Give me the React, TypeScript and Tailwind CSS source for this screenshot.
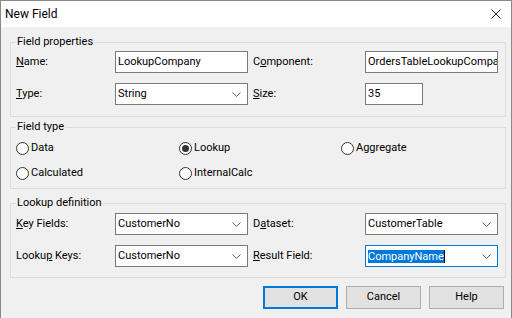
import React from "react";

const Chevron = () => (
  <svg width="9" height="5" viewBox="0 0 9 5" className="shrink-0">
    <path d="M0.5 0.5 L4.5 4.5 L8.5 0.5" stroke="#606060" strokeWidth="1" fill="none" />
  </svg>
);

function TextBox({ value, className = "" }: { value: string; className?: string }) {
  return (
    <div
      className={`h-[22px] border border-[#7a7a7a] bg-white pl-[2px] flex items-center overflow-hidden whitespace-nowrap ${className}`}
    >
      {value}
    </div>
  );
}

function Combo({ value, active, selected }: { value: string; active?: boolean; selected?: boolean }) {
  return (
    <div
      className={`h-[22px] border bg-white pl-[2px] pr-[6px] flex items-center ${
        active ? "border-[#0078d7]" : "border-[#7a7a7a]"
      }`}
    >
      <div className="flex-1 flex items-center whitespace-nowrap">
        {selected ? (
          <>
            <span className="bg-[#0078d7] text-white leading-[13px]">{value}</span>
            <span className="w-px h-[13px] bg-black" />
          </>
        ) : (
          value
        )}
      </div>
      <Chevron />
    </div>
  );
}

function Group({ title, className = "", children }: { title: string; className?: string; children: React.ReactNode }) {
  return (
    <div className={`relative ml-[9px] w-[496px] border border-[#dcdcdc] ${className}`}>
      <span className="absolute left-[5px] top-[-8px] leading-[14px] px-px bg-[#f0f0f0]">{title}</span>
      {children}
    </div>
  );
}

function Radio({ label, checked }: { label: string; checked?: boolean }) {
  return (
    <div className="flex items-center gap-[2px] h-[13px]">
      <span className="w-[13px] h-[13px] rounded-full border border-[#333] bg-white flex items-center justify-center">
        {checked && <span className="w-[7px] h-[7px] rounded-full bg-[#333]" />}
      </span>
      <span>{label}</span>
    </div>
  );
}

const Label = ({ children, className = "" }: { children: React.ReactNode; className?: string }) => (
  <div className={`flex items-center h-[22px] ${className}`}>
    <span>{children}</span>
  </div>
);

function Button({ label, primary }: { label: string; primary?: boolean }) {
  return (
    <div
      className={`w-[75px] h-[23px] flex items-center justify-center bg-[#e1e1e1] border ${
        primary ? "border-[#0078d7] shadow-[inset_0_0_0_1px_#0078d7]" : "border-[#adadad]"
      }`}
    >
      {label}
    </div>
  );
}

export default function App() {
  return (
    <div className="w-[512px] h-[318px] overflow-hidden bg-[#f0f0f0] border-x border-t border-[#8a8a8a] text-[11px] text-black [font-family:Roboto,'Noto_Sans',sans-serif]">
      <div className="h-[26px] bg-white flex items-center justify-between pl-[4px] pr-[10px]">
        <span className="text-[12px]">New Field</span>
        <svg width="10" height="10" viewBox="0 0 10 10">
          <path d="M0.5 0.5 L9.5 9.5 M9.5 0.5 L0.5 9.5" stroke="#222" strokeWidth="1" />
        </svg>
      </div>

      <Group title="Field properties" className="mt-[15px] pt-[8px] pb-[11px]">
        <div className="grid grid-cols-[5px_99px_133px_117px_133px] gap-y-[10px]">
          <span />
          <Label><u>N</u>ame:</Label>
          <TextBox value="LookupCompany" />
          <Label className="pl-[5px]">C<u>o</u>mponent:</Label>
          <TextBox value="OrdersTableLookupCompany" />
          <span />
          <Label><u>T</u>ype:</Label>
          <Combo value="String" />
          <Label className="pl-[5px]"><u>S</u>ize:</Label>
          <TextBox value="35" className="w-[58px]" />
        </div>
      </Group>

      <Group title="Field type" className="mt-[10px] pt-[14px] pb-[8px]">
        <div className="grid grid-cols-[5px_163px_162px_1fr] gap-y-[12px]">
          <span />
          <Radio label="Data" />
          <Radio label="Lookup" checked />
          <Radio label="Aggregate" />
          <span />
          <Radio label="Calculated" />
          <Radio label="InternalCalc" />
          <span />
        </div>
      </Group>

      <Group title="Lookup definition" className="mt-[14px] pt-[9px] pb-[10px]">
        <div className="grid grid-cols-[5px_99px_133px_117px_133px] gap-y-[10px]">
          <span />
          <Label><u>K</u>ey Fields:</Label>
          <Combo value="CustomerNo" />
          <Label className="pl-[5px]">D<u>a</u>taset:</Label>
          <Combo value="CustomerTable" />
          <span />
          <Label>Looku<u>p</u> Keys:</Label>
          <Combo value="CustomerNo" />
          <Label className="pl-[5px]"><u>R</u>esult Field:</Label>
          <Combo value="CompanyName" active selected />
        </div>
      </Group>

      <div className="flex justify-end gap-[8px] mt-[8px] pr-[7px]">
        <Button label="OK" primary />
        <Button label="Cancel" />
        <Button label="Help" />
      </div>
    </div>
  );
}
